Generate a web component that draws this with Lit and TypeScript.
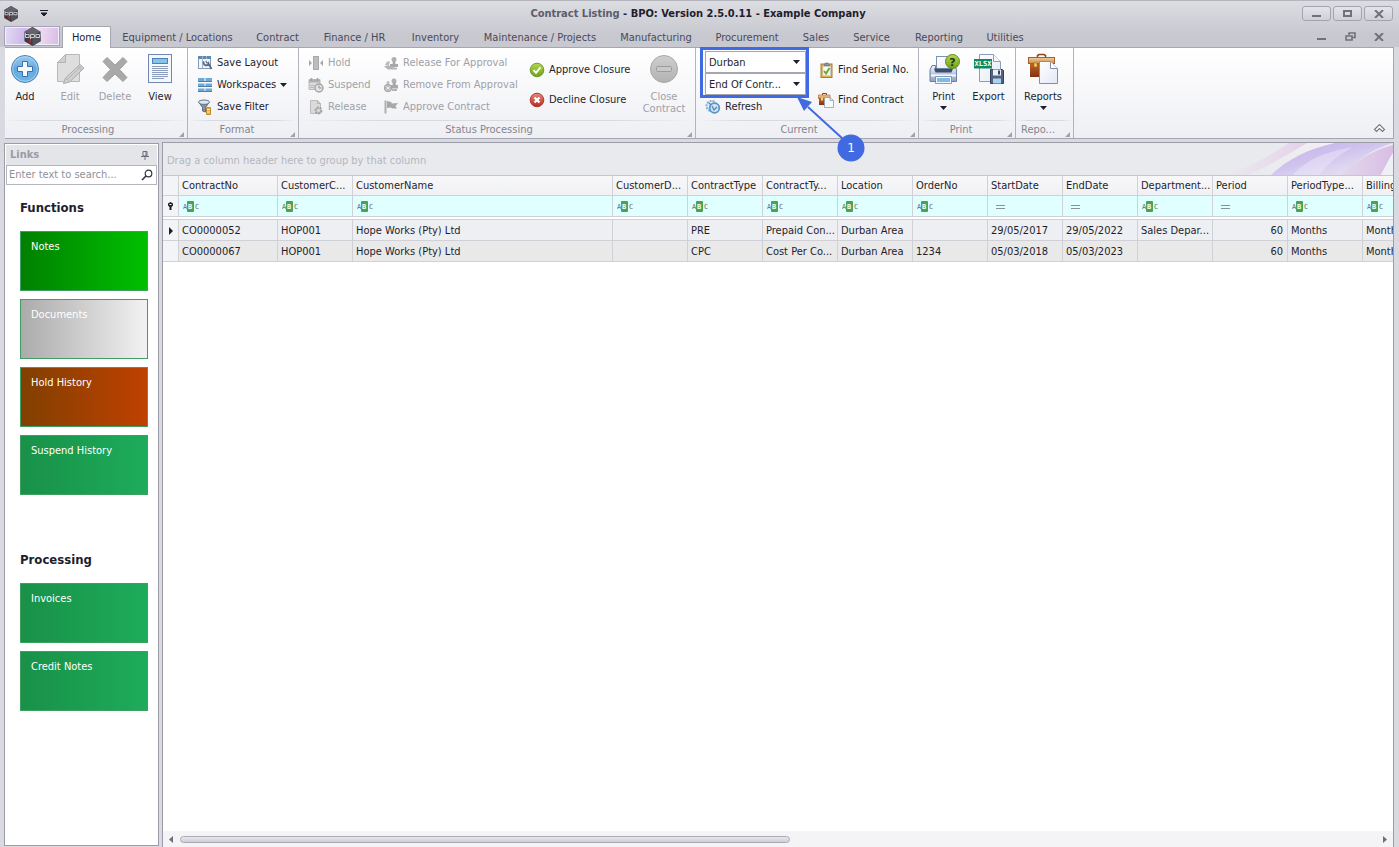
import { LitElement, html, css, TemplateResult } from "lit";
import { customElement } from "lit/decorators.js";
import { classMap } from "lit/directives/class-map.js";

const defs = html`<svg class="defs" aria-hidden="true">
  <defs>
    <linearGradient id="blue" x1="0" y1="0" x2="0" y2="1"><stop offset="0" stop-color="#9ccdf0" /><stop offset=".5" stop-color="#63a9de" /><stop offset="1" stop-color="#6fb7e6" /></linearGradient>
    <linearGradient id="grey" x1="0" y1="0" x2="0" y2="1"><stop offset="0" stop-color="#cfcfcf" /><stop offset="1" stop-color="#b2b2b2" /></linearGradient>
    <linearGradient id="green" x1="0" y1="0" x2="0" y2="1"><stop offset="0" stop-color="#b4d84c" /><stop offset="1" stop-color="#6fa01e" /></linearGradient>
    <linearGradient id="red" x1="0" y1="0" x2="0" y2="1"><stop offset="0" stop-color="#e88a80" /><stop offset="1" stop-color="#b52a22" /></linearGradient>
    <linearGradient id="steel" x1="0" y1="0" x2="0" y2="1"><stop offset="0" stop-color="#eef3fa" /><stop offset="1" stop-color="#8fa3c4" /></linearGradient>
    <linearGradient id="brown" x1="0" y1="0" x2="0" y2="1"><stop offset="0" stop-color="#c8682c" /><stop offset="1" stop-color="#7e3410" /></linearGradient>
    <linearGradient id="tan" x1="0" y1="0" x2="0" y2="1"><stop offset="0" stop-color="#f3cf9a" /><stop offset="1" stop-color="#c98a4c" /></linearGradient>
    <linearGradient id="paper" x1="0" y1="0" x2="1" y2="1"><stop offset="0" stop-color="#ffffff" /><stop offset="1" stop-color="#e3e8f4" /></linearGradient>
    <linearGradient id="pink" x1="0" y1="0" x2="1" y2="0"><stop offset="0" stop-color="#e6cfe8" stop-opacity="0" /><stop offset="1" stop-color="#e3c8e6" stop-opacity=".75" /></linearGradient>
    <linearGradient id="violet" x1="0" y1="0" x2="1" y2="1"><stop offset="0" stop-color="#c0aeea" /><stop offset=".45" stop-color="#cdbfee" stop-opacity=".9" /><stop offset="1" stop-color="#e4def2" stop-opacity=".3" /></linearGradient>
    <linearGradient id="edge" x1="0" y1="0" x2="1" y2="0"><stop offset="0" stop-color="#dccbe8" stop-opacity=".6" /><stop offset="1" stop-color="#d8bce4" /></linearGradient>
    <linearGradient id="haze" x1="0" y1="0" x2="1" y2="0"><stop offset="0" stop-color="#eef0f2" stop-opacity="0" /><stop offset="1" stop-color="#f3eff6" /></linearGradient>
  </defs>
</svg>`;

const logo = (size: number) => html`<svg width=${size} height=${size} viewBox="0 0 20 20" aria-hidden="true">
  <path d="M10 0L18.500 5V15L10 20L1.500 15V5Z" fill="#3a3b41" />
  <path d="M10 0L18.500 5L10 9L1.500 5Z" fill="#63646b" />
  <path d="M10 11L18.500 9V15L10 20Z" fill="#505158" />
  <path d="M2.500 6V11H6.500V8H2.500M8 13V8H12V11H8M13.500 11V8H17.500V11H13.500" fill="none" stroke="#dcdce2" stroke-width="1" />
  <path d="M6 14L8 13V17M8 15L6 16" fill="none" stroke="#b8323a" stroke-width="1" />
</svg>`;

const icons: Record<string, TemplateResult> = {
  add: html`<svg width="32" height="32" viewBox="0 0 32 32" aria-hidden="true">
    <circle cx="16" cy="16" r="13.500" fill="url(#blue)" stroke="#4d82b8" />
    <circle cx="16" cy="16" r="12.300" fill="none" stroke="#b7dbf4" stroke-opacity=".7" />
    <path d="M13.500 8.500H18.500V13.500H23.500V18.500H18.500V23.500H13.500V18.500H8.500V13.500H13.500Z" fill="#f4f9fd" stroke="#3f6ea6" stroke-linejoin="round" />
  </svg>`,
  edit: html`<svg width="32" height="32" viewBox="0 0 32 32" aria-hidden="true">
    <path d="M11.500 1.500H25.500V28.500H3.500V9.500Z" fill="#dedede" stroke="#b9b9b9" />
    <path d="M11.500 1.500V9.500H3.500Z" fill="#cfcfcf" stroke="#b3b3b3" />
    <path d="M9.500 30.500L11.500 25L26 11.500L30 15L15.500 29Z" fill="#d2d2d2" stroke="#a9a9a9" />
    <path d="M24 13.500L28 17M11.500 25L15 28.500M13.500 26.500L27 13.500" fill="none" stroke="#b0b0b0" />
  </svg>`,
  delete: html`<svg width="32" height="32" viewBox="0 0 32 32" aria-hidden="true">
    <path d="M8 4.500L16 12L24 4.500L28 8.500L20.500 16.500L28 24.500L24 28.500L16 21L8 28.500L4 24.500L11.500 16.500L4 8.500Z" fill="#a9a9a9" stroke="#a0a0a0" stroke-linejoin="round" />
  </svg>`,
  view: html`<svg width="32" height="32" viewBox="0 0 32 32" aria-hidden="true">
    <rect x="4.500" y="1.500" width="23" height="28" fill="#f4f7fc" stroke="#7287b0" />
    <rect x="8.500" y="5.500" width="15" height="5" fill="#86c3ea" stroke="#4d82b8" />
    <path d="M8 13.500H24M8 15.500H24M8 17.500H24M8 19.500H24M8 21.500H24M8 23.500H24M8 25.500H20" stroke="#8d9cbc" />
  </svg>`,
  layout: html`<svg width="16" height="16" viewBox="0 0 16 16" aria-hidden="true">
    <rect x="1.500" y="1.500" width="12" height="12" fill="#f3f6fb" stroke="#8797b2" />
    <rect x="1" y="1" width="13" height="3" fill="#5a8ab8" />
    <path d="M5.500 1V13M9.500 1V4" stroke="#9fb1ca" />
    <path d="M7 6.500A2.500 2.500 0 1 0 11.500 8.500L14.500 14" fill="none" stroke="#5b6a88" stroke-width="1.800" />
    <path d="M9 5.500L9.500 8L11.500 7.500" fill="none" stroke="#5b6a88" />
  </svg>`,
  workspaces: html`<svg width="16" height="16" viewBox="0 0 16 16" aria-hidden="true">
    <path d="M1 1H7.500V4.500H1ZM8.500 1H15V4.500H8.500ZM1 6.500H7.500V9.500H1ZM8.500 6.500H15V9.500H8.500ZM1 11.500H7.500V14.500H1ZM8.500 11.500H15V14.500H8.500Z" fill="#6fa9d6" />
    <path d="M1 4.500H15M1 9.500H15M1 14.500H15" stroke="#4a7fae" />
  </svg>`,
  filter: html`<svg width="16" height="16" viewBox="0 0 16 16" aria-hidden="true">
    <path d="M2 3.500L5.500 8.500V12L8.500 13V8.500L12 3.500Z" fill="#8492a8" stroke="#5d6b84" />
    <ellipse cx="7" cy="3.200" rx="5.500" ry="2.200" fill="#dfe6f0" stroke="#66748e" />
    <path d="M9.500 8.500H13.500V15.500H9.500Z" fill="#e9b04a" stroke="#c58a30" />
    <path d="M10 10.500H13M10 13H13" stroke="#fae3ad" />
  </svg>`,
  hold: html`<svg width="16" height="16" viewBox="0 0 16 16" aria-hidden="true">
    <rect x="5.500" y="1.500" width="5" height="13" fill="#bdbdbd" stroke="#a8a8a8" />
    <path d="M1 5L4 8L1 11ZM15 5L12 8L15 11Z" fill="#a8a8a8" />
  </svg>`,
  suspend: html`<svg width="16" height="16" viewBox="0 0 16 16" aria-hidden="true">
    <path d="M1 2.500H12V12.500H1Z" fill="#dcdcdc" stroke="#b8b8b8" />
    <path d="M1 3H12V5.500H1Z" fill="#b0b0b0" /><path d="M3.500 1V4M9.500 1V4" stroke="#a0a0a0" stroke-width="1.500" />
    <path d="M2 8.500H7M2 10.500H6" stroke="#b8b8b8" />
    <circle cx="11" cy="11" r="4" fill="#e2e2e2" stroke="#a4a4a4" stroke-width="1.400" />
    <path d="M11 8.500V11H13.500" fill="none" stroke="#909090" />
  </svg>`,
  release: html`<svg width="16" height="16" viewBox="0 0 16 16" aria-hidden="true">
    <path d="M2.500 1.500H9.500L12.500 4.500V14.500H2.500Z" fill="#dadada" stroke="#bcbcbc" />
    <path d="M9.500 1.500V4.500H12.500" fill="none" stroke="#b4b4b4" />
    <circle cx="10.500" cy="11.500" r="3" fill="#c8c8c8" stroke="#9d9d9d" stroke-width="1.800" stroke-dasharray="2 1" />
    <circle cx="10.500" cy="11.500" r="1" fill="#f0f0f0" />
  </svg>`,
  stamp: html`<svg width="16" height="16" viewBox="0 0 16 16" aria-hidden="true">
    <circle cx="11" cy="4.500" r="2.500" fill="#b0b0b0" />
    <path d="M10 6H12L12.500 9H15V12H7V9H9.500Z" fill="#a8a8a8" />
    <path d="M2 10L4 6.500H7L6 10Z" fill="#bcbcbc" /><path d="M1 11.500L5 10L9 12L14 13V14.500H5Z" fill="#b4b4b4" />
  </svg>`,
  remove: html`<svg width="16" height="16" viewBox="0 0 16 16" aria-hidden="true">
    <circle cx="11" cy="4" r="2.500" fill="#b0b0b0" /><path d="M10 5.500H12.500L13 8H15V11.500H7V8H9.500Z" fill="#a8a8a8" />
    <circle cx="5" cy="11" r="3.700" fill="#bdbdbd" stroke="#a4a4a4" /><path d="M3.500 9.500L6.500 12.500M6.500 9.500L3.500 12.500" stroke="#ececec" />
    <path d="M9 13H14" stroke="#b4b4b4" stroke-width="2" /><circle cx="5" cy="5.500" r="1.500" fill="#bcbcbc" />
  </svg>`,
  flag: html`<svg width="16" height="16" viewBox="0 0 16 16" aria-hidden="true">
    <path d="M2.500 1.500V14.500" stroke="#b0b0b0" stroke-width="2" />
    <path d="M4 2L8 3L9 4.500L15 4L12.500 7L14 9.500H9L8 8.500L4 9Z" fill="#a8a8a8" />
  </svg>`,
  approve: html`<svg width="16" height="16" viewBox="0 0 16 16" aria-hidden="true">
    <circle cx="8" cy="8" r="6.800" fill="url(#green)" stroke="#6f9d2c" />
    <path d="M4.500 8.200L7 10.800L11.500 5.300" fill="none" stroke="#fff" stroke-width="1.900" />
  </svg>`,
  decline: html`<svg width="16" height="16" viewBox="0 0 16 16" aria-hidden="true">
    <circle cx="8" cy="8" r="6.800" fill="url(#red)" stroke="#b0382e" />
    <path d="M5.500 5.500L10.500 10.500M10.500 5.500L5.500 10.500" stroke="#fff" stroke-width="2.400" />
  </svg>`,
  close: html`<svg width="32" height="32" viewBox="0 0 32 32" aria-hidden="true">
    <circle cx="16" cy="16" r="13.500" fill="url(#grey)" stroke="#a9a9a9" />
    <rect x="8.500" y="13.500" width="15" height="5" rx="1" fill="#c8c8c8" stroke="#9c9c9c" />
  </svg>`,
  refresh: html`<svg width="16" height="16" viewBox="0 0 16 16" aria-hidden="true">
    <circle cx="6.500" cy="7" r="5" fill="#e4f0fa" stroke="#7fb0da" stroke-width="2" stroke-dasharray="2 1" />
    <circle cx="9.500" cy="9" r="4.800" fill="#cfe4f5" stroke="#5b94c6" stroke-width="1.800" />
    <path d="M7 7L9 11L12 8M4 4L6 6" fill="none" stroke="#4f87b8" stroke-width="1.300" />
  </svg>`,
  serial: html`<svg width="16" height="16" viewBox="0 0 16 16" aria-hidden="true">
    <rect x="3" y="2" width="11" height="13.500" fill="#e0b25c" stroke="#a87a30" />
    <rect x="5" y="4.500" width="7.500" height="9" fill="#f8fafc" stroke="#c7cbd4" stroke-width=".6" />
    <path d="M6 3.500L7.500 1H10L11.500 3.500Z" fill="#8e9ab0" stroke="#56627a" stroke-width=".6" />
    <path d="M6 9L8 11.500L11.500 6" fill="none" stroke="#6bab36" stroke-width="2" />
  </svg>`,
  contract: html`<svg width="16" height="16" viewBox="0 0 16 16" aria-hidden="true">
    <path d="M4.500 3V1.500H8.500V3" fill="none" stroke="#8c4415" />
    <path d="M1 6H11V13H1Z" fill="url(#brown)" /><path d="M0 3H12V6.500H0Z" fill="url(#tan)" stroke="#a5602a" stroke-width=".6" />
    <rect x="3" y="5.500" width="2" height="3" fill="#f7d65c" />
    <path d="M6.500 5.500H12L15.500 8.500V15.500H6.500Z" fill="#f7f9fd" stroke="#8e9dba" stroke-width=".8" /><path d="M12 5.500V8.500H15.500" fill="none" stroke="#8e9dba" stroke-width=".8" />
  </svg>`,
  print: html`<svg width="32" height="32" viewBox="0 0 32 32" aria-hidden="true">
    <rect x="8.500" y="3.500" width="16" height="13" fill="url(#paper)" stroke="#7d90b5" />
    <path d="M4 12.500H7.500V16H24.500V12.500H27L28.500 17V28.500H2V17Z" fill="url(#steel)" stroke="#6b80a8" />
    <path d="M6 15.500H25L23.500 19.500H7.500Z" fill="#3c4d70" />
    <path d="M3 22.500H28" stroke="#f5f8fc" stroke-width="2" />
    <rect x="8.500" y="24.500" width="14" height="5" fill="#7ebbe6" stroke="#f4f8fc" /><path d="M7.500 30.500H23.500V23.500H7.500Z" fill="none" stroke="#7386aa" stroke-width=".8" />
    <circle cx="24.500" cy="8.500" r="7" fill="url(#green)" stroke="#5f8d1c" />
    <text x="24.500" y="12.500" text-anchor="middle" font-size="11" font-weight="bold" fill="#1d3a10">?</text>
  </svg>`,
  export: html`<svg width="32" height="32" viewBox="0 0 32 32" aria-hidden="true">
    <path d="M6.500 1.500H20.500L27.500 8.500V28.500H6.500Z" fill="url(#paper)" stroke="#8d9dc0" />
    <path d="M20.500 1.500V8.500H27.500" fill="#f5f7fc" stroke="#8d9dc0" />
    <rect x="1" y="6" width="18" height="9.500" fill="#0e8a63" />
    <text x="10" y="13.400" text-anchor="middle" font-size="7" font-weight="bold" fill="#fff" class="mono">XLSX</text>
    <path d="M17.500 16.500H29.500L30.500 17.500V30.500H17.500Z" fill="#52627f" stroke="#34435f" />
    <rect x="20" y="16.500" width="8" height="6" fill="#eef2f8" /><rect x="25" y="17.500" width="2" height="4" fill="#34435f" />
    <rect x="20" y="25.500" width="8" height="5" fill="#a8d3f0" />
  </svg>`,
  reports: html`<svg width="32" height="32" viewBox="0 0 32 32" aria-hidden="true">
    <path d="M10.500 5.500V2.500L12 1.500H17L18.500 2.500V5.500" fill="none" stroke="#8c4a1f" stroke-width="1.600" />
    <path d="M3 9H26V24H3Z" fill="url(#brown)" />
    <rect x="1.500" y="4.500" width="26" height="6" fill="url(#tan)" stroke="#a5602a" />
    <rect x="7" y="10" width="3" height="4" fill="#f7d65c" stroke="#9b6a17" stroke-width=".6" />
    <path d="M12.500 8.500H23.500L30.500 15.500V30.500H12.500Z" fill="url(#paper)" stroke="#7d8fb5" />
    <path d="M23.500 8.500V15.500H30.500" fill="#fff" stroke="#7d8fb5" />
  </svg>`,
};

const caret = html`<svg class="caret" width="7" height="4" viewBox="0 0 7 4" aria-hidden="true"><path d="M0 0H7L3.500 4Z" fill="#1e1e2d" /></svg>`;
const abc = html`<svg width="16" height="11" viewBox="0 0 16 11" role="img" aria-label="Contains">
  <rect x="4" y="0" width="7" height="11" rx="1" fill="#46a552" />
  <text x="0" y="8" font-size="7" fill="#5f6a70" class="mono">A</text>
  <text x="5" y="8" font-size="7" font-weight="bold" fill="#fff" class="mono">B</text>
  <text x="12" y="8" font-size="7" fill="#5f6a70" class="mono">C</text>
</svg>`;
const equalsIcon = html`<svg width="16" height="11" viewBox="0 0 16 11" role="img" aria-label="Equals"><path d="M4 4.500H13M4 7.500H13" stroke="#8a9296" /></svg>`;

interface Column { title: string; width: number; date?: boolean; right?: boolean; cells: [string, string]; }

const columns: Column[] = [
  { title: "ContractNo", width: 99, cells: ["CO0000052", "CO0000067"] },
  { title: "CustomerC...", width: 75, cells: ["HOP001", "HOP001"] },
  { title: "CustomerName", width: 260, cells: ["Hope Works (Pty) Ltd", "Hope Works (Pty) Ltd"] },
  { title: "CustomerD...", width: 75, cells: ["", ""] },
  { title: "ContractType", width: 75, cells: ["PRE", "CPC"] },
  { title: "ContractTy...", width: 75, cells: ["Prepaid Con...", "Cost Per Co..."] },
  { title: "Location", width: 75, cells: ["Durban Area", "Durban Area"] },
  { title: "OrderNo", width: 75, cells: ["", "1234"] },
  { title: "StartDate", width: 75, date: true, cells: ["29/05/2017", "05/03/2018"] },
  { title: "EndDate", width: 75, date: true, cells: ["29/05/2022", "05/03/2023"] },
  { title: "Department...", width: 75, cells: ["Sales Depar...", ""] },
  { title: "Period", width: 75, date: true, right: true, cells: ["60", "60"] },
  { title: "PeriodType...", width: 75, cells: ["Months", "Months"] },
  { title: "Billing", width: 75, cells: ["Months", "Months"] },
];

const tabs = ["Equipment / Locations", "Contract", "Finance / HR", "Inventory", "Maintenance / Projects", "Manufacturing", "Procurement", "Sales", "Service", "Reporting", "Utilities"];

@customElement("app-root")
export class AppRoot extends LitElement {
  static styles = css`
    :host { display: block; height: 100vh; font: 11px/14px "DejaVu Sans Condensed", "DejaVu Sans", sans-serif; color: #1e1e2d; }
    * { box-sizing: border-box; }
    button, input, select { font: inherit; color: inherit; margin: 0; padding: 0; border: 0; background: none; }
    svg { flex: none; display: block; }
    svg text { font-family: "DejaVu Sans", sans-serif; }
    svg text.mono { font-family: "DejaVu Sans Mono", monospace; }
    .defs { position: absolute; width: 0; height: 0; }
    .window { height: 100%; display: flex; flex-direction: column; background: #d9dae1; border-top: 1px solid #b4b5bd; }
    .chrome { background: linear-gradient(#dcdde1, #c8c8d0 34px); }
    .titlebar { display: grid; grid-template-columns: 1fr auto 1fr; align-items: center; height: 25px; padding: 0 6px 0 3px; }
    .quick { display: flex; align-items: center; gap: 21px; }
    .title { margin: 0; font-size: 11px; font-weight: bold; white-space: nowrap; }
    .title span { color: #5d5d6b; }
    .winbtns { display: flex; justify-content: flex-end; gap: 2px; }
    .winbtns button { width: 29px; height: 15px; border: 1px solid #a3a4ad; border-radius: 3px; background: linear-gradient(#e4e5e9, #cfd0d7); display: grid; place-items: center; }
    .tabbar { display: flex; align-items: stretch; height: 21px; padding: 0 15px 0 4px; }
    .appbtn { width: 56px; height: 20px; border: 1px solid #a9a0bb; display: grid; place-items: center; background: linear-gradient(100deg, #e3dcf4, #cdb9ea 35%, #f0e4f6 55%, #d9b9e3); box-shadow: inset 0 0 0 1px #f3effa; }
    .tabs { display: grid; grid-template-columns: 51px 131px 69px 85px 77px 132px 100px 82px 56px 55px 80px 52px; flex: 1; padding-left: 1px; }
    .tabs button { color: #4a4a58; white-space: nowrap; padding-top: 3px; }
    .tabs .active { color: #1e1e2d; background: #fff; border: 1px solid #a5a6b0; border-bottom: 0; border-radius: 2px 2px 0 0; margin: 0 1px -1px 1px; position: relative; padding-top: 1px; }
    .mdi { display: flex; align-items: center; gap: 18px; }
    .ribbon { display: flex; height: 92px; margin: 0 5px; border: 1px solid #a5a6b0; border-width: 1px 1px 1px 0; background: linear-gradient(#fff, #eeeff4); }
    .group { position: relative; display: grid; grid-template: 72px 18px / minmax(0, 1fr); border-right: 1px solid #b2b3bc; }
    .body { display: flex; }
    .caption { position: relative; text-align: center; color: #85858f; line-height: 18px; padding-top: 1px; padding-right: 16px; background: linear-gradient(90deg, transparent, #d9dae0 20%, #d9dae0 80%, transparent) top / 100% 1px no-repeat; }
    .corner { position: absolute; right: 3px; bottom: 1px; }
    .processing { width: 183px; }
    .format { width: 111px; }
    .format .caption, .printing .caption { padding-right: 12px; }
    .status { width: 397px; }
    .current { width: 223px; }
    .printing { width: 97px; }
    .reporting { width: 58px; }
    .big { width: 45px; padding-top: 5px; display: flex; flex-direction: column; align-items: center; line-height: 12px; }
    .processing .big:nth-child(odd) { width: 40px; }
    .processing .big:nth-child(even) { width: 50px; }
    .big span { margin-top: 6px; }
    .big .caret { margin-top: 3px; }
    .big:disabled, .small:disabled { color: #a0a0a8; }
    .col { display: flex; flex-direction: column; padding-top: 3px; align-items: flex-start; }
    .small { display: flex; align-items: center; gap: 4px; height: 22px; padding-top: 1px; white-space: nowrap; }
    .col.two { padding-top: 6px; }
    .col.two .small { height: 30px; padding-top: 2px; }
    .format .col { padding-left: 9px; }
    .status .col { padding-left: 9px; }
    .status .a { width: 84px; }
    .status .b { width: 146px; padding-left: 0; }
    .status .c { width: 110px; padding-left: 0; }
    .status .big { width: 50px; }
    .current .col { padding-left: 9px; width: 122px; }
    .current .col.two { padding-left: 0; width: 91px; }
    .combo { position: relative; width: 101px; height: 22px; }
    .combo select { appearance: none; width: 100%; height: 22px; border: 1px solid #a5a6b0; background: #fff; padding: 1px 20px 0 3px; border-radius: 0; overflow: hidden; }
    .combo .caret { position: absolute; right: 6px; top: 9px; pointer-events: none; }
    .marker { position: absolute; left: 4px; top: -1px; pointer-events: none; z-index: 2; }
    .marker text { font-size: 12px; }
    .printing .body { padding-left: 2px; }
    .reporting .big { width: 54px; }
    .reporting .caption { text-align: left; padding-left: 5px; padding-right: 0; }
    .collapse { margin: auto 7px 5px auto; }
    .work { flex: 1; min-height: 0; display: flex; gap: 3px; padding: 3px 5px 0 4px; }
    .links { width: 155px; margin: 1px 0 1px; border: 1px solid #9b9ca6; background: #fff; padding: 1px; }
    .links header { display: flex; align-items: center; justify-content: space-between; height: 20px; padding: 0 8px 0 4px; background: #e4e5e9; color: #9a9ba5; }
    .links h2 { margin: 0; font-size: 11px; }
    .search { display: flex; align-items: center; height: 20px; border: 1px solid #b4b5bd; padding: 0 3px 0 2px; margin-bottom: 15px; }
    .search input { flex: 1; min-width: 0; outline: 0; }
    .search input::placeholder { color: #8f909a; opacity: 1; }
    .section { padding: 0 9px 0 14px; margin-bottom: 57px; display: flex; flex-direction: column; gap: 8px; }
    .section h3 { margin: 0 0 7px; font-size: 13px; line-height: 16px; }
    .tile { height: 60px; padding: 8px 10px; border: 1px solid #3f9f62; text-align: left; color: #fff; display: flex; background: linear-gradient(90deg, #199148, #1dac5b); }
    .notes { background: linear-gradient(90deg, #008000, #00c000); }
    .docs { background: linear-gradient(90deg, #ababab, #f2f2f2); }
    .held { background: linear-gradient(90deg, #804000, #c04000); }
    .grid { flex: 1; min-width: 0; display: flex; flex-direction: column; border: 1px solid #9b9ca6; border-bottom: 0; background: #fff; }
    .groupby { display: flex; align-items: stretch; justify-content: space-between; height: 32px; background: #e9eaee; color: #b5b6be; line-height: 36px; padding-left: 4px; overflow: hidden; }
    .scroller { flex: 1; overflow: hidden; }
    table { border-collapse: separate; border-spacing: 0; table-layout: fixed; width: 1275px; }
    th, td { padding: 0 4px 0 3px; border-right: 1px solid #cfd1d7; border-bottom: 1px solid #cfd1d7; white-space: nowrap; overflow: hidden; text-align: left; font-weight: normal; height: 21px; }
    .ind { width: 16px; padding: 0 0 0 4px; background: #f3f4f7; }
    thead th { height: 21px; border-top: 1px solid #c5c7cd; background: linear-gradient(#f8f8fa, #f0f1f4); }
    .frow td { background: #e0ffff; padding-left: 4px; }
    .frow .ind { background: #f3f4f7; padding-left: 4px; }
    .gap td { height: 3px; padding: 0; border-right: 0; background: #fff; }
    .r0 td { background: #eeeff2; padding-top: 2px; }
    .r1 td { background: #e9e9e9; padding-top: 2px; }
    tbody .ind { background: #f3f4f7; }
    td.right { text-align: right; }
    .hscroll { display: flex; align-items: center; height: 16px; background: #f4f4f7; padding: 0 6px; gap: 7px; }
    .track { flex: 1; }
    .thumb { width: 51%; height: 7px; border: 1px solid #a9aab3; border-radius: 4px; background: linear-gradient(#e6e6eb, #cfd0d7); }
  `;

  private big(icon: string, label: unknown, disabled = false, menu = false) {
    return html`<button class="big" ?disabled=${disabled}>${icons[icon]}<span>${label}</span>${menu ? caret : ""}</button>`;
  }

  private small(icon: string, label: string, disabled = false, menu = false) {
    return html`<button class="small" ?disabled=${disabled}>${icons[icon]}<span>${label}</span>${menu ? caret : ""}</button>`;
  }

  private group(name: string, caption: string, body: TemplateResult) {
    return html`<section class="group ${name}">
      <div class="body">${body}</div>
      <div class="caption">${caption}<svg class="corner" width="5" height="5" viewBox="0 0 5 5" aria-hidden="true"><path d="M5 0V5H0Z" fill="#a0a1a9" /></svg></div>
    </section>`;
  }

  private combo(label: string, value: string) {
    return html`<div class="combo"><select aria-label=${label}><option>${value}</option></select>${caret}</div>`;
  }

  private renderRibbon() {
    return html`<div class="ribbon">
      ${this.group("processing", "Processing", html`${this.big("add", "Add")}${this.big("edit", "Edit", true)}${this.big("delete", "Delete", true)}${this.big("view", "View")}`)}
      ${this.group("format", "Format", html`<div class="col">${this.small("layout", "Save Layout")}${this.small("workspaces", "Workspaces", false, true)}${this.small("filter", "Save Filter")}</div>`)}
      ${this.group("status", "Status Processing", html`
        <div class="col a">${this.small("hold", "Hold", true)}${this.small("suspend", "Suspend", true)}${this.small("release", "Release", true)}</div>
        <div class="col b">${this.small("stamp", "Release For Approval", true)}${this.small("remove", "Remove From Approval", true)}${this.small("flag", "Approve Contract", true)}</div>
        <div class="col two c">${this.small("approve", "Approve Closure")}${this.small("decline", "Decline Closure")}</div>
        ${this.big("close", html`Close<br />Contract`, true)}`)}
      ${this.group("current", "Current", html`
        <div class="col">${this.combo("Site", "Durban")}${this.combo("Status", "End Of Contr...")}${this.small("refresh", "Refresh")}</div>
        <div class="col two">${this.small("serial", "Find Serial No.")}${this.small("contract", "Find Contract")}</div>
        <svg class="marker" width="166" height="116" viewBox="0 0 166 116" aria-hidden="true">
          <rect x="1.500" y="1.500" width="106" height="48" fill="none" stroke="#4169e1" stroke-width="3" />
          <path d="M108 60L143 92" stroke="#4169e1" stroke-width="2" />
          <path d="M97 50L112 55L104 64Z" fill="#4169e1" />
          <circle cx="151" cy="101" r="13.500" fill="#4169e1" />
          <text x="151" y="105" text-anchor="middle" fill="#fff">1</text>
        </svg>`)}
      ${this.group("printing", "Print", html`${this.big("print", "Print", false, true)}${this.big("export", "Export")}`)}
      ${this.group("reporting", "Repo...", html`${this.big("reports", "Reports", false, true)}`)}
      <button class="collapse" aria-label="Collapse ribbon"><svg width="13" height="10" viewBox="0 0 13 10"><path d="M1.500 6.500L6.500 1.500L11.500 6.500L9.500 8.500L6.500 5.500L3.500 8.500Z" fill="#fff" stroke="#777884" stroke-width="1.200" /></svg></button>
    </div>`;
  }

  private renderLinks() {
    return html`<aside class="links">
      <header><h2>Links</h2><svg width="8" height="9" viewBox="0 0 8 9" aria-hidden="true"><path d="M2 .5H6V5H2ZM0 5.500H8M4 5.500V9M5 1V5" fill="none" stroke="#6d6e7a" /></svg></header>
      <label class="search"><input type="text" aria-label="Search links" placeholder="Enter text to search..." />
        <svg width="12" height="12" viewBox="0 0 12 12" aria-hidden="true"><circle cx="7.500" cy="4.500" r="3.300" fill="none" stroke="#33333f" stroke-width="1.200" /><path d="M5 7L1 11" stroke="#33333f" stroke-width="1.600" /></svg></label>
      <div class="section"><h3>Functions</h3>
        <button class="tile notes">Notes</button><button class="tile docs">Documents</button>
        <button class="tile held">Hold History</button><button class="tile">Suspend History</button></div>
      <div class="section"><h3>Processing</h3><button class="tile">Invoices</button><button class="tile">Credit Notes</button></div>
    </aside>`;
  }

  private renderGrid() {
    return html`<main class="grid">
      <div class="groupby"><span>Drag a column header here to group by that column</span>
        <svg width="170" height="32" viewBox="0 0 170 32" aria-hidden="true">
          <path d="M0 32C30 24 50 10 66 0H84C68 10 48 22 25 32Z" fill="url(#pink)" />
          <path d="M25 32C45 22 68 10 84 0H112C85 6 65 16 48 32Z" fill="url(#haze)" />
          <path d="M48 32C65 16 85 6 112 0H170C150 6 138 14 118 32Z" fill="url(#violet)" />
          <path d="M70 32C80 20 96 10 130 4C112 14 104 22 96 32Z" fill="#f0ecf8" fill-opacity=".45" />
          <path d="M118 32C132 18 148 8 170 2V10C166 16 162 24 158 32Z" fill="url(#edge)" />
          <path d="M158 32C162 24 166 16 170 10V32Z" fill="#eff0f3" />
        </svg></div>
      <div class="scroller"><table>
        <colgroup><col style="width:16px" />${columns.map((c) => html`<col style="width:${c.width}px" />`)}</colgroup>
        <thead><tr><th class="ind"></th>${columns.map((c) => html`<th scope="col">${c.title}</th>`)}</tr></thead>
        <tbody>
          <tr class="frow"><td class="ind"><svg width="7" height="8" viewBox="0 0 7 8" aria-hidden="true"><path d="M1 1.500L3.500 0L6 1.500V3.500L4.500 5V8H2.500V5L1 3.500Z" fill="#1e1e2d" /><path d="M2.500 2.500H4.500" stroke="#fff" /></svg></td>
            ${columns.map((c) => html`<td>${c.date ? equalsIcon : abc}</td>`)}</tr>
          <tr class="gap"><td colspan="15"></td></tr>
          ${[0, 1].map((r) => html`<tr class="r${r}">
            <td class="ind">${r === 0 ? html`<svg width="6" height="8" viewBox="0 0 6 8" aria-hidden="true"><path d="M2 0L6 4L2 8Z" fill="#1e1e2d" /></svg>` : ""}</td>
            ${columns.map((c) => html`<td class=${classMap({ right: !!c.right })}>${c.cells[r]}</td>`)}</tr>`)}
        </tbody></table></div>
      <div class="hscroll">
        <button aria-label="Scroll left"><svg width="4" height="7" viewBox="0 0 4 7"><path d="M4 0V7L0 3.500Z" fill="#6d6e78" /></svg></button>
        <div class="track"><div class="thumb"></div></div>
        <button aria-label="Scroll right"><svg width="4" height="7" viewBox="0 0 4 7"><path d="M0 0V7L4 3.500Z" fill="#6d6e78" /></svg></button>
      </div>
    </main>`;
  }

  render() {
    const min = html`<svg width="10" height="8" viewBox="0 0 10 8" aria-hidden="true"><path d="M0 6H9" stroke="#70717d" stroke-width="2" /></svg>`;
    const x = html`<svg width="10" height="8" viewBox="0 0 10 8" aria-hidden="true"><path d="M1 0L9 8M9 0L1 8" stroke="#70717d" stroke-width="2" /></svg>`;
    return html`${defs}<div class="window">
      <div class="chrome">
        <div class="titlebar">
          <div class="quick">${logo(16)}<button aria-label="Customize quick access"><svg width="8" height="7" viewBox="0 0 8 7"><path d="M0 .5H8M1 3H7L4 6Z" fill="#1e1e2d" stroke="#1e1e2d" /></svg></button></div>
          <h1 class="title"><span>Contract Listing</span> - BPO: Version 2.5.0.11 - Example Company</h1>
          <div class="winbtns"><button aria-label="Minimize">${min}</button>
            <button aria-label="Maximize"><svg width="9" height="7" viewBox="0 0 9 7"><rect x="1" y="1" width="7" height="5" fill="none" stroke="#70717d" stroke-width="2" /></svg></button>
            <button aria-label="Close">${x}</button></div>
        </div>
        <div class="tabbar">
          <button class="appbtn" aria-label="Application menu">${logo(19)}</button>
          <nav class="tabs"><button class="active">Home</button>${tabs.map((t) => html`<button>${t}</button>`)}</nav>
          <div class="mdi"><button aria-label="Minimize document">${min}</button>
            <button aria-label="Restore document"><svg width="11" height="9" viewBox="0 0 11 9"><path d="M4 3V1H10V5.500H7M1 4H7V8H1Z" fill="none" stroke="#70717d" stroke-width="1.600" /></svg></button>
            <button aria-label="Close document">${x}</button></div>
        </div>
      </div>
      ${this.renderRibbon()}
      <div class="work">${this.renderLinks()}${this.renderGrid()}</div>
    </div>`;
  }
}
